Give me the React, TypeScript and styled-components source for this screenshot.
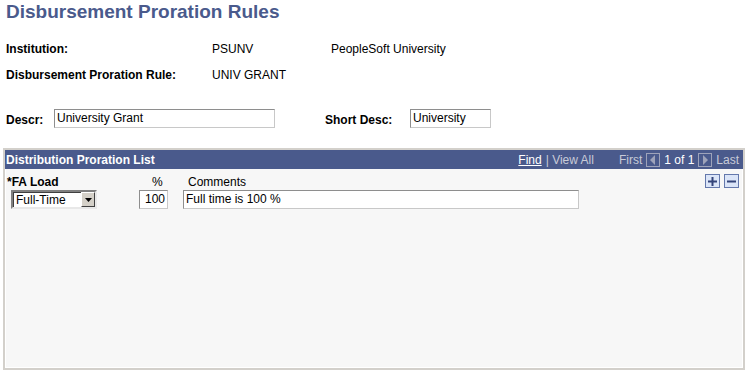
import styled, { createGlobalStyle } from "styled-components";

const GlobalStyle = createGlobalStyle`
  body {
    margin: 0;
    background: #ffffff;
    color: #000000;
    font-family: "Liberation Sans", Arial, sans-serif;
    font-size: 12px;
  }
`;

const Page = styled.div`
  padding-left: 3px;
  width: 742px;
`;

const Title = styled.h1`
  margin: 0;
  padding-left: 3px;
  height: 24px;
  line-height: 24px;
  font-size: 19px;
  font-weight: bold;
  color: #4a5a8c;
`;

const InfoRow = styled.div<{ top: number }>`
  display: grid;
  grid-template-columns: 206px 119px auto;
  align-items: center;
  height: 18px;
  margin-top: ${(p) => p.top}px;
  padding-left: 3px;
`;

const Label = styled.span`
  font-weight: bold;
`;

const DescRow = styled.div`
  display: flex;
  align-items: center;
  height: 19px;
  margin-top: 25px;
  padding-left: 3px;
`;

const DescLabel = styled.span<{ width: number }>`
  font-weight: bold;
  width: ${(p) => p.width}px;
  padding-top: 3px;
`;

const TextBox = styled.div<{ width: number; align?: string }>`
  box-sizing: border-box;
  width: ${(p) => p.width}px;
  height: 19px;
  line-height: 17px;
  padding: 0 2px;
  background: #ffffff;
  border: 1px solid;
  border-color: #8e8e8e #c8c8c8 #c8c8c8 #8e8e8e;
  text-align: ${(p) => p.align || "left"};
  white-space: nowrap;
  overflow: hidden;
`;

const Spacer = styled.div<{ width: number }>`
  width: ${(p) => p.width}px;
`;

const GridBox = styled.div`
  box-sizing: border-box;
  margin-top: 20px;
  width: 742px;
  height: 222px;
  border: 2px solid #d3d0cb;
  display: flex;
  flex-direction: column;
`;

const GridHeader = styled.div`
  height: 19px;
  background: #4a5a8c;
  color: #ffffff;
  display: flex;
  align-items: center;
  justify-content: space-between;
  padding: 0 4px 0 1px;
`;

const GridTitle = styled.span`
  font-weight: bold;
`;

const Nav = styled.div`
  display: flex;
  align-items: center;
  gap: 4px;
  color: #c8cbd8;
`;

const NavLink = styled.span`
  color: #ffffff;
  text-decoration: underline;
`;

const NavText = styled.span<{ light?: boolean; gapLeft?: number }>`
  color: ${(p) => (p.light ? "#ffffff" : "#c8cbd8")};
  margin-left: ${(p) => p.gapLeft || 0}px;
`;

const ArrowBox = styled.span`
  box-sizing: border-box;
  width: 14px;
  height: 14px;
  border: 1px solid #9ea3ba;
  display: flex;
  align-items: center;
  justify-content: center;
`;

const GridBody = styled.div`
  flex: 1;
  background: #f7f7f7;
  border: 1px solid #ffffff;
  border-top: none;
  padding: 6px 3px 0 1px;
  display: grid;
  grid-template-columns: 132px 44px 1fr auto;
  grid-template-rows: 15px 19px;
  align-content: start;
`;

const ColHead = styled.span<{ bold?: boolean; indent?: number }>`
  font-weight: ${(p) => (p.bold ? "bold" : "normal")};
  padding-left: ${(p) => p.indent || 0}px;
  line-height: 15px;
`;

const Buttons = styled.div`
  display: flex;
  gap: 4px;
  align-self: start;
  margin-top: -1px;
`;

const RowButton = styled.span`
  box-sizing: border-box;
  width: 15px;
  height: 14px;
  background: #dbe5f8;
  border: 1px solid #6478ac;
  display: flex;
  align-items: center;
  justify-content: center;
`;

const SelectBox = styled.div`
  box-sizing: border-box;
  margin-left: 4px;
  width: 86px;
  height: 19px;
  background: #ffffff;
  border: 2px solid;
  border-color: #7f7f7f #e8e8e8 #e8e8e8 #7f7f7f;
  box-shadow: inset 1px 1px 0 #404040;
  display: flex;
  align-items: center;
  justify-content: space-between;
  padding-left: 3px;
`;

const DropButton = styled.span`
  box-sizing: border-box;
  width: 14px;
  height: 15px;
  background: #d4d0c8;
  border: 1px solid;
  border-color: #ffffff #404040 #404040 #ffffff;
  display: flex;
  align-items: center;
  justify-content: center;
`;

function Triangle({ dir }: { dir: "left" | "right" }) {
  return (
    <svg width="6" height="10" viewBox="0 0 6 10">
      <polygon
        points={dir === "left" ? "5,0 5,10 0,5" : "1,0 1,10 6,5"}
        fill="#9ea3ba"
      />
    </svg>
  );
}

function App() {
  return (
    <Page>
      <GlobalStyle />
      <Title>Disbursement Proration Rules</Title>
      <InfoRow top={16}>
        <Label>Institution:</Label>
        <span>PSUNV</span>
        <span>PeopleSoft University</span>
      </InfoRow>
      <InfoRow top={8}>
        <Label>Disbursement Proration Rule:</Label>
        <span>UNIV GRANT</span>
      </InfoRow>
      <DescRow>
        <DescLabel width={48}>Descr:</DescLabel>
        <TextBox width={221}>University Grant</TextBox>
        <Spacer width={50} />
        <DescLabel width={85}>Short Desc:</DescLabel>
        <TextBox width={81}>University</TextBox>
      </DescRow>
      <GridBox>
        <GridHeader>
          <GridTitle>Distribution Proration List</GridTitle>
          <Nav>
            <NavLink>Find</NavLink>
            <NavText>| View All</NavText>
            <NavText gapLeft={21}>First</NavText>
            <ArrowBox>
              <Triangle dir="left" />
            </ArrowBox>
            <NavText light>1 of 1</NavText>
            <ArrowBox>
              <Triangle dir="right" />
            </ArrowBox>
            <NavText>Last</NavText>
          </Nav>
        </GridHeader>
        <GridBody>
          <ColHead bold>*FA Load</ColHead>
          <ColHead indent={13}>%</ColHead>
          <ColHead indent={5}>Comments</ColHead>
          <Buttons>
            <RowButton>
              <svg width="9" height="9" viewBox="0 0 9 9">
                <rect x="3.5" y="0" width="2" height="9" fill="#34457a" />
                <rect x="0" y="3.5" width="9" height="2" fill="#34457a" />
              </svg>
            </RowButton>
            <RowButton>
              <svg width="9" height="9" viewBox="0 0 9 9">
                <rect x="0" y="3.5" width="9" height="2" fill="#34457a" />
              </svg>
            </RowButton>
          </Buttons>
          <SelectBox>
            <span>Full-Time</span>
            <DropButton>
              <svg width="7" height="4" viewBox="0 0 7 4">
                <polygon points="0,0 7,0 3.5,4" fill="#000000" />
              </svg>
            </DropButton>
          </SelectBox>
          <TextBox width={29} align="right">
            100
          </TextBox>
          <TextBox width={396}>Full time is 100 %</TextBox>
          <span />
        </GridBody>
      </GridBox>
    </Page>
  );
}

export default App;
